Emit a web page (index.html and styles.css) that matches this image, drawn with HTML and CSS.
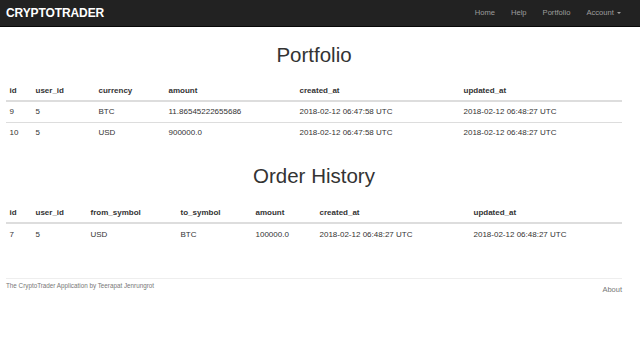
FILE: index.html
```html
<!DOCTYPE html>
<html lang="en">
<head>
    <meta charset="UTF-8">
    <title>CryptoTrader - Portfolio</title>
    <link rel="stylesheet" href="styles.css">
</head>
<body>
    <nav class="navbar">
        <a class="brand" href="#">CRYPTOTRADER</a>
        <ul class="nav">
            <li><a href="#">Home</a></li>
            <li><a href="#">Help</a></li>
            <li><a href="#">Portfolio</a></li>
            <li><a href="#">Account <span class="caret"></span></a></li>
        </ul>
    </nav>
    <div class="container">
        <h1>Portfolio</h1>
        <table class="table portfolio">
            <thead>
                <tr><th>id</th><th>user_id</th><th>currency</th><th>amount</th><th>created_at</th><th>updated_at</th></tr>
            </thead>
            <tbody>
                <tr><td>9</td><td>5</td><td>BTC</td><td>11.86545222655686</td><td>2018-02-12 06:47:58 UTC</td><td>2018-02-12 06:48:27 UTC</td></tr>
                <tr><td>10</td><td>5</td><td>USD</td><td>900000.0</td><td>2018-02-12 06:47:58 UTC</td><td>2018-02-12 06:48:27 UTC</td></tr>
            </tbody>
        </table>

        <h1 class="second">Order History</h1>
        <table class="table orders">
            <thead>
                <tr><th>id</th><th>user_id</th><th>from_symbol</th><th>to_symbol</th><th>amount</th><th>created_at</th><th>updated_at</th></tr>
            </thead>
            <tbody>
                <tr><td>7</td><td>5</td><td>USD</td><td>BTC</td><td>100000.0</td><td>2018-02-12 06:48:27 UTC</td><td>2018-02-12 06:48:27 UTC</td></tr>
            </tbody>
        </table>

        <footer class="footer">
            <small>The CryptoTrader Application by Teerapat Jenrungrot</small>
            <a href="#">About</a>
        </footer>
    </div>
</body>
</html>
```

FILE: styles.css
```css
body { margin: 0; font-family: "Liberation Sans", Arial, sans-serif; font-size: 8px; color: #333; background: #fff; }
a { text-decoration: none; }

.navbar { height: 26px; background: #222; border-bottom: 1px solid #080808; display: flex; align-items: center; justify-content: space-between; padding: 0 10px 0 6px; }
.brand { color: #fff; font-weight: bold; font-size: 12px; letter-spacing: -0.1px; }
.nav { list-style: none; margin: 0; padding: 0; display: flex; }
.nav a { color: #9d9d9d; font-size: 7.6px; padding: 0 8px; display: block; line-height: 26px; }
.nav li:last-child a { padding-right: 9px; }
.caret { display: inline-block; width: 0; height: 0; margin-left: 1px; vertical-align: middle; border-top: 2.5px solid #9d9d9d; border-left: 2.5px solid transparent; border-right: 2.5px solid transparent; }

.container { padding: 0 18px 0 6px; }
h1 { font-size: 20.5px; font-weight: 500; line-height: 23px; text-align: center; margin: 15.5px 0 14.5px; color: #333; }
h1.second { margin-top: 21.5px; margin-bottom: 15.5px; }

.table { width: 100%; border-collapse: collapse; }
.table th, .table td { text-align: left; padding: 4.5px 3.5px; line-height: 11px; vertical-align: top; }
.table th { font-weight: bold; border-bottom: 2px solid #ddd; padding-bottom: 4px; }
.table td { border-top: 1px solid #ddd; }
.table tbody tr:first-child td { border-top: 0; }

.portfolio th:nth-child(1) { width: 19px; }
.portfolio th:nth-child(2) { width: 56px; }
.portfolio th:nth-child(3) { width: 63px; }
.portfolio th:nth-child(4) { width: 124px; }
.portfolio th:nth-child(5) { width: 157px; }

.orders th:nth-child(1) { width: 19px; }
.orders th:nth-child(2) { width: 48px; }
.orders th:nth-child(3) { width: 83px; }
.orders th:nth-child(4) { width: 68px; }
.orders th:nth-child(5) { width: 57px; }
.orders th:nth-child(6) { width: 147px; }

.footer { margin-top: 34px; border-top: 1px solid #eee; padding-top: 3px; display: flex; justify-content: space-between; align-items: flex-start; }
.footer small { font-size: 6.3px; color: #777; }
.footer a { color: #777; font-size: 7.5px; margin-top: 3px; }
```
